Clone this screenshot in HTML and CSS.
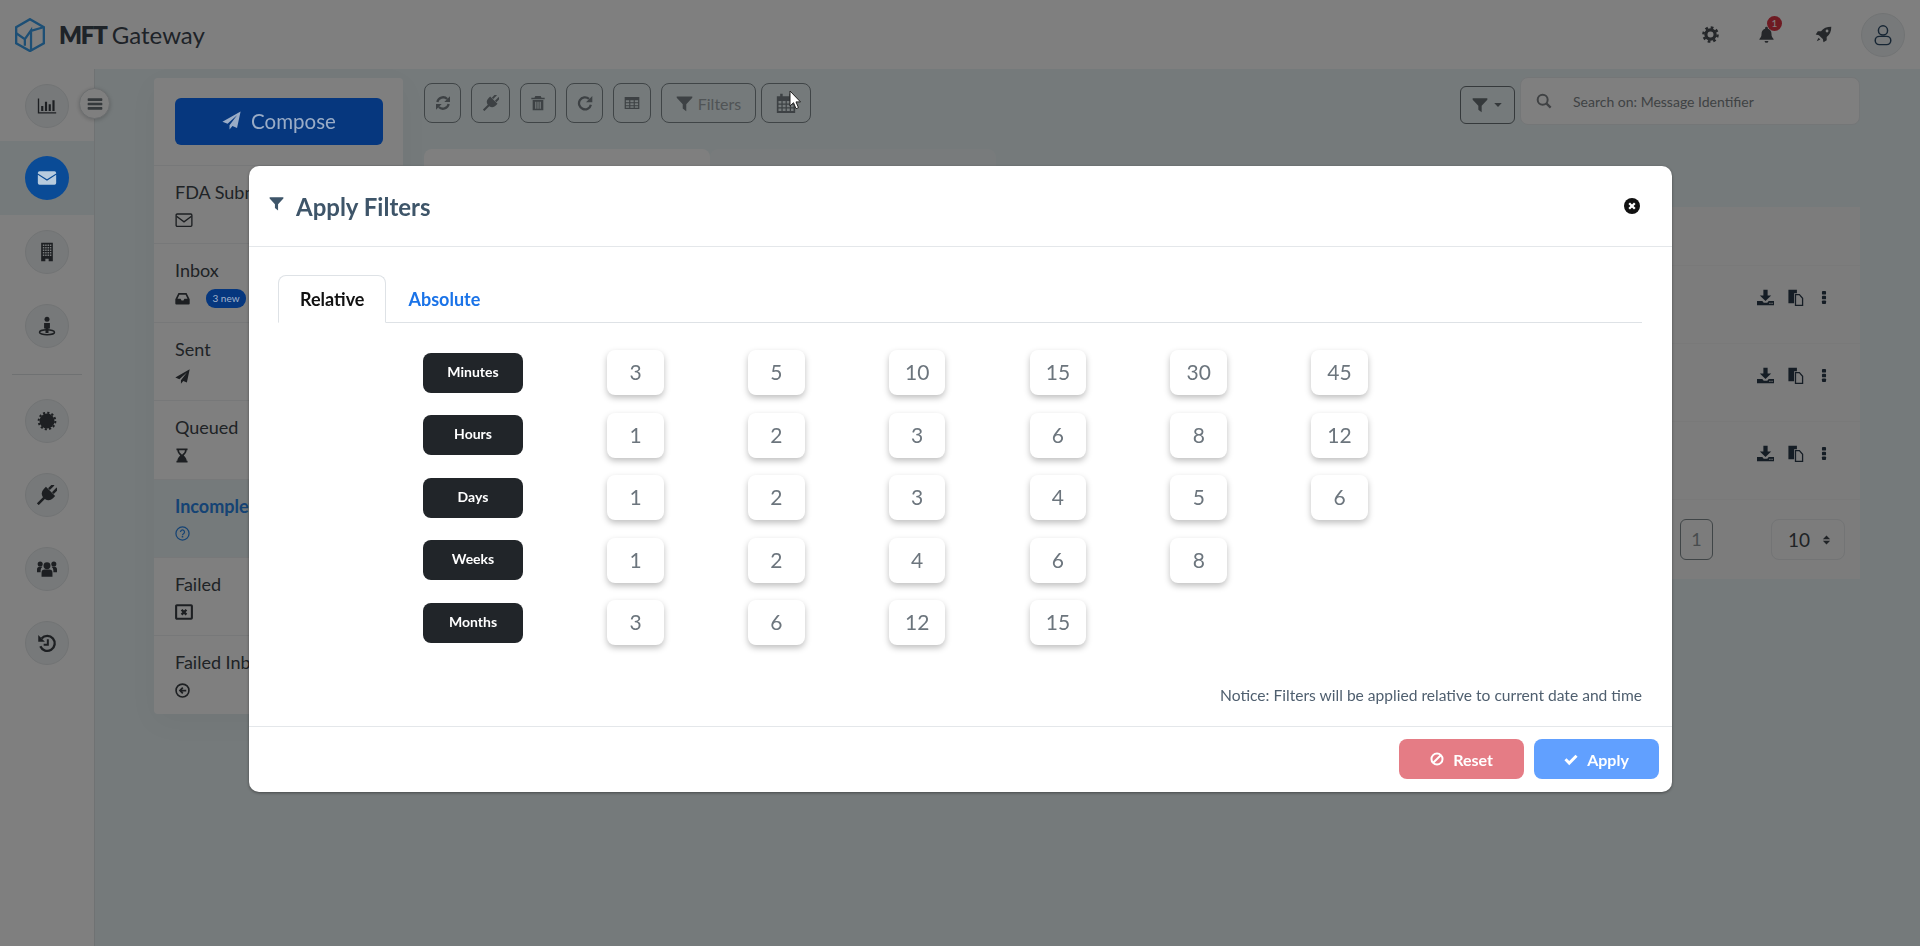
FILE: index.html
```html
<!DOCTYPE html>
<html lang="en">
<head>
    <meta charset="UTF-8">
    <meta name="viewport" content="width=device-width, initial-scale=1.0">
    <title>MFT Gateway - Apply Filters</title>
    <link rel="stylesheet" href="styles.css">
</head>
<body>
    <!-- icon sprite -->
    <svg class="sprite" xmlns="http://www.w3.org/2000/svg">
        <symbol id="i-chart" viewBox="0 0 24 24"><path d="M1 3h1.6v16.4H23V21H1z"/><path d="M5 12h2.6v6H5zM9.500 7h2.600v11H9.500zM14 10h2.600v8H14zM18.500 5h2.600v13h-2.600z"/></symbol>
        <symbol id="i-envelope" viewBox="0 0 24 24"><path d="M1 6a2 2 0 0 1 2-2h18a2 2 0 0 1 2 2v.6l-11 7-11-7z"/><path d="M1 8.200l11 7 11-7V18a2 2 0 0 1-2 2H3a2 2 0 0 1-2-2z"/></symbol>
        <symbol id="i-envelope-o" viewBox="0 0 24 24"><rect x="1.500" y="4" width="21" height="16.500" rx="1.500" fill="none" stroke="currentColor" stroke-width="1.800"/><path d="M2 7l10 7.500L22 7" fill="none" stroke="currentColor" stroke-width="1.800"/></symbol>
        <symbol id="i-building" viewBox="0 0 24 24"><path fill-rule="evenodd" d="M5 1h14v22h-5v-3h-4v3H5zM7 3v1.800h1.800V3zM9.800 3v1.800h1.800V3zM12.600 3v1.800h1.800V3zM15.400 3v1.800h1.800V3zM7 6v1.800h1.800V6zM9.800 6v1.800h1.800V6zM12.600 6v1.800h1.800V6zM15.400 6v1.800h1.800V6zM7 9v1.800h1.800V9zM9.800 9v1.800h1.800V9zM12.600 9v1.800h1.800V9zM15.400 9v1.800h1.800V9zM7 12v1.800h1.800V12zM9.800 12v1.800h1.800V12zM12.600 12v1.800h1.800V12zM15.400 12v1.800h1.800V12zM7 15v1.800h1.800V15zM9.800 15v1.800h1.800V15zM12.600 15v1.800h1.800V15zM15.400 15v1.800h1.800V15z"/></symbol>
        <symbol id="i-street" viewBox="0 0 24 24"><circle cx="12" cy="4" r="3"/><path d="M8.500 8.500h7V15h-1.700v5.500h-3.600V15H8.500z"/><ellipse cx="12" cy="19.500" rx="9" ry="3" fill="none" stroke="currentColor" stroke-width="1.800"/></symbol>
        <symbol id="i-cert" viewBox="0 0 24 24"><circle cx="12" cy="12" r="9"/><circle cx="12" cy="12" r="10" fill="none" stroke="currentColor" stroke-width="2.400" stroke-dasharray="2.618 2.618"/></symbol>
        <symbol id="i-plug" viewBox="2 2 20 20"><g transform="rotate(45 12 12)"><path d="M8 0h2.500v6.500H8zM13.500 0H16v6.500h-2.500z"/><path d="M5.500 7h13v3a6.500 6.500 0 0 1-5.200 6.400V25h-2.600v-8.600A6.500 6.500 0 0 1 5.500 10z"/></g></symbol>
        <symbol id="i-users" viewBox="1 2 22 20"><circle cx="12" cy="8.500" r="3.800"/><path d="M6 20.500v-4.500a3.500 3.500 0 0 1 3.500-3.500h5a3.500 3.500 0 0 1 3.500 3.500v4.500z"/><circle cx="4.500" cy="6.500" r="2.800"/><circle cx="19.500" cy="6.500" r="2.800"/><path d="M1 15.500v-3a3 3 0 0 1 3-3h3a5.500 5.500 0 0 0-2 4v2zM23 15.500v-3a3 3 0 0 0-3-3h-3a5.500 5.500 0 0 1 2 4v2z"/></symbol>
        <symbol id="i-history" viewBox="0 0 24 24"><path d="M5.500 6.500A9 9 0 1 1 4 16" fill="none" stroke="currentColor" stroke-width="2.800"/><path d="M1.500 2.500v8h8z"/><path d="M13 7.500V14H8" fill="none" stroke="currentColor" stroke-width="2.400"/></symbol>
        <symbol id="i-bars" viewBox="0 0 24 24"><path d="M2 3.500h20a1 1 0 0 1 1 1v2a1 1 0 0 1-1 1H2a1 1 0 0 1-1-1v-2a1 1 0 0 1 1-1zM2 10h20a1 1 0 0 1 1 1v2a1 1 0 0 1-1 1H2a1 1 0 0 1-1-1v-2a1 1 0 0 1 1-1zM2 16.500h20a1 1 0 0 1 1 1v2a1 1 0 0 1-1 1H2a1 1 0 0 1-1-1v-2a1 1 0 0 1 1-1z"/></symbol>
        <symbol id="i-inbox" viewBox="0 0 24 24"><path fill-rule="evenodd" d="M5.500 3h13l5 10v7a1.500 1.500 0 0 1-1.500 1.500H2A1.500 1.500 0 0 1 .5 20v-7zM7 6l-3 6.500h5l1.500 2.500h3l1.500-2.500h5L17 6z"/></symbol>
        <symbol id="i-plane" viewBox="0 0 24 24"><path d="M23.500.5L.5 13.500l6.500 2.700L19 5.500 9.500 18v5.500l3.700-4.500 5.800 2.500z"/></symbol>
        <symbol id="i-hourglass" viewBox="0 0 24 24"><path fill-rule="evenodd" d="M2.500 0h19v3H20c0 4.500-3 6.500-5 9 2 2.500 5 4.500 5 9h1.500v3h-19v-3H4c0-4.500 3-6.500 5-9-2-2.500-5-4.500-5-9H2.500zM7 3c0 3.500 2 5 5 7.500 3-2.500 5-4 5-7.500z"/></symbol>
        <symbol id="i-question" viewBox="0 0 24 24"><circle cx="12" cy="12" r="10.500" fill="none" stroke="currentColor" stroke-width="2"/><path d="M8.800 9.500a3.200 3.200 0 1 1 4.800 2.800c-1 .6-1.600 1.200-1.600 2.400" fill="none" stroke="currentColor" stroke-width="2"/><rect x="10.800" y="16" width="2.400" height="2.400"/></symbol>
        <symbol id="i-window" viewBox="0 0 24 24"><rect x="1.500" y="3" width="21" height="18" rx="1" fill="none" stroke="currentColor" stroke-width="2.800"/><path d="M8.800 9l6.400 6.400M15.200 9l-6.400 6.400" fill="none" stroke="currentColor" stroke-width="3.200"/></symbol>
        <symbol id="i-arrow-left" viewBox="0 0 24 24"><circle cx="12" cy="12" r="10.300" fill="none" stroke="currentColor" stroke-width="2.600"/><path d="M12.500 7.500L8 12l4.500 4.500M8.500 12H18" fill="none" stroke="currentColor" stroke-width="2.800"/></symbol>
        <symbol id="i-refresh" viewBox="0 0 24 24"><path d="M3.500 10.500A8.800 8.800 0 0 1 18.300 6" fill="none" stroke="currentColor" stroke-width="3.400"/><path d="M22.500 2v8.500H14z"/><path d="M20.500 13.500A8.800 8.800 0 0 1 5.700 18" fill="none" stroke="currentColor" stroke-width="3.400"/><path d="M1.500 22v-8.500H10z"/></symbol>
        <symbol id="i-trash" viewBox="0 0 24 24"><path fill-rule="evenodd" d="M8 1.500h8l1.300 2.500H22v2.300H2V4h4.700zM4 7.500h16V23H4zM7.800 10v10.500h1.800V10zM11.100 10v10.500h1.800V10zM14.400 10v10.500h1.800V10z"/></symbol>
        <symbol id="i-repeat" viewBox="0 0 24 24"><path d="M20.800 14.500A9 9 0 1 1 18 5.800" fill="none" stroke="currentColor" stroke-width="3.400"/><path d="M23 1.500v9.500h-9.500z"/></symbol>
        <symbol id="i-table" viewBox="0 0 24 24"><path fill-rule="evenodd" d="M1 3h22v18H1zM2.800 8v3h5v-3zM9.500 8v3h5v-3zM16.200 8v3h5v-3zM2.800 12.500v3h5v-3zM9.500 12.500v3h5v-3zM16.200 12.500v3h5v-3zM2.800 17v2.300h5V17zM9.500 17v2.300h5V17zM16.200 17v2.300h5V17z"/></symbol>
        <symbol id="i-filter" viewBox="0 0 24 24"><path d="M1 2h22v2L14.500 13v10L9.500 19v-6L1 4z"/></symbol>
        <symbol id="i-calendar" viewBox="0 0 24 24"><path fill-rule="evenodd" d="M5 1h3v3h8V1h3v3h4v20H1V4h4zM3 9.500v3h3.500v-3zM8 9.500v3h3.500v-3zM13 9.500v3h3.500v-3zM18 9.500v3h3v-3zM3 14v3h3.500v-3zM8 14v3h3.500v-3zM13 14v3h3.500v-3zM18 14v3h3v-3zM3 18.500v3h3.500v-3zM8 18.500v3h3.500v-3zM13 18.500v3h3.500v-3zM18 18.500v3h3v-3z"/></symbol>
        <symbol id="i-cog" viewBox="0 0 24 24"><circle cx="12" cy="12" r="6.500" fill="none" stroke="currentColor" stroke-width="4.500"/><circle cx="12" cy="12" r="10" fill="none" stroke="currentColor" stroke-width="3.500" stroke-dasharray="3.850 4"/></symbol>
        <symbol id="i-bell" viewBox="0 0 24 24"><path d="M12 1a2 2 0 0 1 2 2v.8c3.500 1 5 3.700 5 7.200 0 4.500 1.500 5.500 3 7.500v1H2v-1c1.500-2 3-3 3-7.500 0-3.500 1.500-6.200 5-7.200V3a2 2 0 0 1 2-2zM9.300 21h5.400a2.700 2.700 0 0 1-5.400 0z"/></symbol>
        <symbol id="i-rocket" viewBox="0 0 24 24"><path fill-rule="evenodd" d="M23 1c-6.500 0-11 2-14.500 6.500H4L1 12l4.500 1 5.500 5.500 1 4.500 4.500-3v-4.500C21 12 23 7.500 23 1zM17 5a2 2 0 1 1 0 4 2 2 0 0 1 0-4z"/><path d="M5 16.500l2.500 2.500L2.500 21.500z"/></symbol>
        <symbol id="i-user" viewBox="0 0 24 24"><circle cx="12" cy="7" r="5" fill="none" stroke="currentColor" stroke-width="1.600"/><rect x="3.500" y="13.500" width="17" height="9" rx="4.500" fill="none" stroke="currentColor" stroke-width="1.600"/></symbol>
        <symbol id="i-search" viewBox="0 0 24 24"><circle cx="10" cy="10" r="7.500" fill="none" stroke="currentColor" stroke-width="3"/><path d="M15.500 15.500l6.500 6.500" fill="none" stroke="currentColor" stroke-width="3.400"/></symbol>
        <symbol id="i-caret" viewBox="0 0 24 24"><path d="M3 7h18l-9 10z"/></symbol>
        <symbol id="i-download" viewBox="0 0 24 24"><path d="M9 1h6v8h5l-8 8-8-8h5z"/><path fill-rule="evenodd" d="M0 17h7.500l2 2.500h5l2-2.500H24v6H0zM17.500 19.500v1.500h1.500v-1.500zM20.500 19.500v1.500H22v-1.500z"/></symbol>
        <symbol id="i-copy" viewBox="0 0 24 24"><path d="M2 1h12v5h-4v14H2z"/><path d="M12 8h5.500l4.500 5v10H12z" fill="none" stroke="currentColor" stroke-width="1.800"/></symbol>
        <symbol id="i-kebab" viewBox="0 0 24 24"><rect x="8.500" y="1" width="7" height="6" rx="1.500"/><rect x="8.500" y="9" width="7" height="6" rx="1.500"/><rect x="8.500" y="17" width="7" height="6" rx="1.500"/></symbol>
        <symbol id="i-sort" viewBox="0 0 24 24"><path d="M12 2l8 8.500H4zM12 22l-8-8.500h16z"/></symbol>
        <symbol id="i-ban" viewBox="0 0 24 24"><circle cx="12" cy="12" r="9.500" fill="none" stroke="currentColor" stroke-width="3.400"/><path d="M5.500 18.500l13-13" fill="none" stroke="currentColor" stroke-width="3.400"/></symbol>
        <symbol id="i-check" viewBox="0 0 24 24"><path d="M2.500 12.500l6.500 6.500L21.500 6.500" fill="none" stroke="currentColor" stroke-width="5"/></symbol>
        <symbol id="i-close" viewBox="0 0 24 24"><circle cx="12" cy="12" r="12"/><path d="M7.800 7.800l8.400 8.400M16.200 7.800l-8.400 8.400" fill="none" stroke="#fff" stroke-width="3.400"/></symbol>
    </svg>

    <div class="topbar">
        <div class="logo">
            <svg class="logo-mark" viewBox="0 0 29 33"><path d="M14.500 1.200L28 9v15.500L14.500 32 1 24.500V9z" fill="none" stroke="currentColor" stroke-width="2.400"/><path d="M1.500 15l8 5.500 6-8.500v19M15.500 12.500L27.500 9M9.500 20.500V27" fill="none" stroke="currentColor" stroke-width="2.200"/></svg>
            <span class="logo-text"><b>MFT</b> Gateway</span>
        </div>
        <div class="top-icons">
            <svg class="ic top-ic"><use href="#i-cog"/></svg>
            <span class="bell">
                <svg class="ic top-ic"><use href="#i-bell"/></svg>
                <span class="bell-badge">1</span>
            </span>
            <svg class="ic top-ic"><use href="#i-rocket"/></svg>
            <span class="user-btn"><svg class="ic"><use href="#i-user"/></svg></span>
        </div>
    </div>

    <div class="layout">
        <div class="sidebar">
            <div class="side-item"><span class="side-btn"><svg class="ic"><use href="#i-chart"/></svg></span></div>
            <div class="side-item active"><span class="side-btn"><svg class="ic"><use href="#i-envelope"/></svg></span></div>
            <div class="side-item"><span class="side-btn"><svg class="ic"><use href="#i-building"/></svg></span></div>
            <div class="side-item"><span class="side-btn"><svg class="ic"><use href="#i-street"/></svg></span></div>
            <div class="side-divider"></div>
            <div class="side-item"><span class="side-btn"><svg class="ic"><use href="#i-cert"/></svg></span></div>
            <div class="side-item"><span class="side-btn"><svg class="ic"><use href="#i-plug"/></svg></span></div>
            <div class="side-item"><span class="side-btn"><svg class="ic"><use href="#i-users"/></svg></span></div>
            <div class="side-item"><span class="side-btn"><svg class="ic"><use href="#i-history"/></svg></span></div>
            <span class="side-toggle"><svg class="ic"><use href="#i-bars"/></svg></span>
        </div>

        <div class="folders">
            <div class="compose-wrap">
                <button class="compose"><svg class="ic"><use href="#i-plane"/></svg><span>Compose</span></button>
            </div>
            <div class="folder">
                <div class="folder-name">FDA Submissions</div>
                <div class="folder-ic"><svg class="ic fda"><use href="#i-envelope-o"/></svg></div>
            </div>
            <div class="folder">
                <div class="folder-name">Inbox</div>
                <div class="folder-ic"><svg class="ic"><use href="#i-inbox"/></svg><span class="new-badge">3 new</span></div>
            </div>
            <div class="folder">
                <div class="folder-name">Sent</div>
                <div class="folder-ic"><svg class="ic"><use href="#i-plane"/></svg></div>
            </div>
            <div class="folder">
                <div class="folder-name">Queued</div>
                <div class="folder-ic"><svg class="ic tall"><use href="#i-hourglass"/></svg></div>
            </div>
            <div class="folder current">
                <div class="folder-name">Incomplete</div>
                <div class="folder-ic"><svg class="ic"><use href="#i-question"/></svg></div>
            </div>
            <div class="folder">
                <div class="folder-name">Failed</div>
                <div class="folder-ic"><svg class="ic fda"><use href="#i-window"/></svg></div>
            </div>
            <div class="folder">
                <div class="folder-name">Failed Inbound</div>
                <div class="folder-ic"><svg class="ic"><use href="#i-arrow-left"/></svg></div>
            </div>
        </div>

        <div class="content">
            <div class="toolbar">
                <div class="tools">
                    <button class="tool"><svg class="ic"><use href="#i-refresh"/></svg></button>
                    <button class="tool"><svg class="ic"><use href="#i-plug"/></svg></button>
                    <button class="tool"><svg class="ic"><use href="#i-trash"/></svg></button>
                    <button class="tool"><svg class="ic"><use href="#i-repeat"/></svg></button>
                    <button class="tool"><svg class="ic"><use href="#i-table"/></svg></button>
                    <button class="tool"><svg class="ic"><use href="#i-filter"/></svg>Filters</button>
                    <button class="tool"><svg class="ic"><use href="#i-calendar"/></svg></button>
                </div>
                <button class="filter-drop"><svg class="ic"><use href="#i-filter"/></svg><svg class="ic caret"><use href="#i-caret"/></svg></button>
                <div class="search">
                    <svg class="ic"><use href="#i-search"/></svg>
                    <span>Search on: Message Identifier</span>
                </div>
            </div>

            <div class="msg-tabs">
                <div class="msg-tab"></div>
                <div class="msg-tab faint"></div>
            </div>

            <div class="msg-card">
                <div class="msg-head"></div>
                <div class="msg-row">
                    <svg class="ic"><use href="#i-download"/></svg>
                    <svg class="ic"><use href="#i-copy"/></svg>
                    <svg class="ic kebab"><use href="#i-kebab"/></svg>
                </div>
                <div class="msg-row">
                    <svg class="ic"><use href="#i-download"/></svg>
                    <svg class="ic"><use href="#i-copy"/></svg>
                    <svg class="ic kebab"><use href="#i-kebab"/></svg>
                </div>
                <div class="msg-row">
                    <svg class="ic"><use href="#i-download"/></svg>
                    <svg class="ic"><use href="#i-copy"/></svg>
                    <svg class="ic kebab"><use href="#i-kebab"/></svg>
                </div>
                <div class="msg-foot">
                    <span class="page-no">1</span>
                    <span class="page-size">10 <svg class="ic"><use href="#i-sort"/></svg></span>
                </div>
            </div>
        </div>
    </div>

    <div class="backdrop"></div>

    <div class="modal-wrap">
        <div class="modal">
            <div class="modal-header">
                <svg class="ic title-ic"><use href="#i-filter"/></svg>
                <h2>Apply Filters</h2>
                <svg class="ic close-ic"><use href="#i-close"/></svg>
            </div>
            <div class="modal-body">
                <div class="tabs">
                    <div class="tab selected">Relative</div>
                    <div class="tab">Absolute</div>
                </div>
                <div class="ranges">
                    <div class="range-label">Minutes</div>
                    <div class="range-val">3</div><div class="range-val">5</div><div class="range-val">10</div><div class="range-val">15</div><div class="range-val">30</div><div class="range-val">45</div>
                    <div class="range-label">Hours</div>
                    <div class="range-val">1</div><div class="range-val">2</div><div class="range-val">3</div><div class="range-val">6</div><div class="range-val">8</div><div class="range-val">12</div>
                    <div class="range-label">Days</div>
                    <div class="range-val">1</div><div class="range-val">2</div><div class="range-val">3</div><div class="range-val">4</div><div class="range-val">5</div><div class="range-val">6</div>
                    <div class="range-label">Weeks</div>
                    <div class="range-val">1</div><div class="range-val">2</div><div class="range-val">4</div><div class="range-val">6</div><div class="range-val">8</div><div></div>
                    <div class="range-label">Months</div>
                    <div class="range-val">3</div><div class="range-val">6</div><div class="range-val">12</div><div class="range-val">15</div><div></div><div></div>
                </div>
                <p class="notice">Notice: Filters will be applied relative to current date and time</p>
            </div>
            <div class="modal-footer">
                <button class="action reset"><svg class="ic"><use href="#i-ban"/></svg>Reset</button>
                <button class="action apply"><svg class="ic"><use href="#i-check"/></svg>Apply</button>
            </div>
        </div>
    </div>

    <!-- mouse pointer in the capture -->
    <svg class="pointer" viewBox="0 0 12 20"><path d="M1 1v15l3.500-3.300 2.500 6 2.500-1-2.500-5.800H11.500z" fill="#fff" stroke="#222" stroke-width="1"/></svg>
</body>
</html>
```

FILE: styles.css
```css
* {
    box-sizing: border-box;
}

html, body {
    margin: 0;
    height: 946px;
    overflow: hidden;
}

body {
    background: #eaf4f6;
    color: #40464c;
    font-family: Lato, "Open Sans", sans-serif;
    font-size: 16px;
}

.sprite {
    display: none;
}

.ic {
    width: 16px;
    height: 16px;
    fill: currentColor;
    flex: none;
}

button {
    font-family: inherit;
}

/* top bar */
.topbar {
    height: 69px;
    background: #fff;
    display: flex;
    align-items: center;
    justify-content: space-between;
    padding: 0 15px;
}

.logo {
    display: flex;
    align-items: center;
    gap: 14px;
}

.logo-mark {
    width: 30px;
    height: 34px;
    color: #3a9eea;
}

.logo-text {
    font-size: 24px;
    color: #3c4650;
}

.logo-text b {
    font-weight: 800;
    letter-spacing: -1.200px;
    margin-right: -1px;
}

.top-icons {
    display: flex;
    align-items: center;
    height: 100%;
    color: #4a4f54;
}

.top-ic {
    width: 17px;
    height: 17px;
}

.top-icons > .top-ic:first-child {
    margin-right: 39px;
}

.bell {
    position: relative;
    display: flex;
    margin-right: 40px;
}

.bell-badge {
    position: absolute;
    top: -10px;
    left: 9px;
    width: 15px;
    height: 15px;
    border-radius: 50%;
    background: #dc3545;
    color: #fff;
    font-size: 10px;
    line-height: 15px;
    text-align: center;
}

.user-btn {
    width: 44px;
    height: 44px;
    border-radius: 50%;
    background: #eef2f4;
    border: 1px solid #e3e7e9;
    margin-left: 29px;
    display: flex;
    align-items: center;
    justify-content: center;
    color: #2e4c68;
}

.user-btn .ic {
    width: 22px;
    height: 22px;
}

/* page under the topbar */
.layout {
    display: flex;
    height: 877px;
}

.sidebar {
    position: relative;
    width: 95px;
    background: #fff;
    border-right: 1px solid #dfe5e7;
    flex: none;
}

.side-item {
    height: 74px;
    display: flex;
    align-items: center;
    justify-content: center;
}

.side-item:first-child {
    height: 72px;
    padding-top: 2px;
}

.side-item.active {
    background: #eaf4f6;
}

.side-btn {
    width: 44px;
    height: 44px;
    border-radius: 50%;
    background: #eef2f4;
    border: 1px solid #e3e7e9;
    display: flex;
    align-items: center;
    justify-content: center;
    color: #3a3f44;
}

.side-btn .ic {
    width: 20px;
    height: 20px;
}

/* this one shows brighter than the backdrop */
.side-item.active .side-btn {
    position: relative;
    z-index: 20;
    background: #0a4b96;
    border: 0;
    color: #b7cbde;
}

.side-divider {
    height: 1px;
    background: #dfe3e5;
    margin: 11px 12px 9px;
}

.side-toggle {
    position: absolute;
    top: 19px;
    left: 79px;
    width: 31px;
    height: 31px;
    border-radius: 50%;
    background: #fff;
    border: 1px solid #d9dde0;
    box-shadow: 0 1px 4px rgba(0, 0, 0, 0.2);
    display: flex;
    align-items: center;
    justify-content: center;
    color: #6a7278;
}

/* folder list */
.folders {
    width: 249px;
    height: 636px;
    margin: 9px 0 0 59px;
    background: #fff;
    border-radius: 4px;
    box-shadow: 0 8px 30px rgba(0, 0, 0, 0.04);
    flex: none;
}

.compose-wrap {
    height: 88px;
    padding: 20px 21px 0;
    border-bottom: 1px solid #eef0f2;
}

.compose {
    width: 208px;
    height: 47px;
    padding: 0 0 2px;
    background: #0d6efd;
    border: 0;
    border-radius: 6px;
    font-size: 20.5px;
    display: flex;
    align-items: center;
    justify-content: center;
    gap: 10px;
}

.compose .ic,
.compose span {
    position: relative;
    z-index: 20;
    color: #9aacc6;
}

.compose .ic {
    width: 19px;
    height: 19px;
}

.folder {
    height: 78.4px;
    padding: 12px 21px 0;
    border-bottom: 1px solid #eef0f2;
}

.folder:last-child {
    border-bottom: 0;
}

.folder.current {
    background: #eaf4f6;
    color: #2a86e8;
    font-weight: 700;
}

.folder-name {
    font-size: 18px;
    line-height: 28px;
    white-space: nowrap;
}

.folder-ic {
    display: flex;
    align-items: center;
    gap: 16px;
    height: 20px;
    margin-top: 4px;
    color: #3a3f44;
}

.folder.current .folder-ic {
    color: #2a86e8;
}

.folder-ic .ic {
    width: 15px;
    height: 15px;
}

.folder-ic .fda {
    width: 18px;
    height: 18px;
}

.folder-ic .tall {
    width: 14px;
    height: 17px;
}

.new-badge {
    position: relative;
    z-index: 20;
    width: 40px;
    background: #06377e;
    color: #a4b5cd;
    font-size: 10px;
    line-height: 19px;
    text-align: center;
    border-radius: 9px;
}

/* message area */
.content {
    width: 1436px;
    margin: 8px 0 0 21px;
    flex: none;
}

.toolbar {
    display: flex;
    align-items: flex-start;
    height: 48px;
}

.tools {
    display: flex;
    gap: 10px;
    margin-top: 6px;
}

.tool {
    height: 40px;
    width: 37px;
    padding: 0;
    background: transparent;
    border: 1px solid #808a8e;
    border-radius: 8px;
    color: #7a8388;
    font-size: 16px;
    display: flex;
    align-items: center;
    justify-content: center;
    gap: 5px;
}

.tool:nth-child(2) { width: 39px; }
.tool:nth-child(3) { width: 36px; }
.tool:nth-child(5) { width: 38px; }
.tool:nth-child(6) { width: 95px; color: #a0a8ac; }
.tool:nth-child(6) .ic { color: #7a8388; width: 17px; height: 17px; }
.tool:nth-child(7) { width: 50px; margin-left: -5px; }

.tool:nth-child(7) .ic {
    width: 20px;
    height: 20px;
}

.filter-drop {
    margin: 9px 0 0 auto;
    width: 55px;
    height: 38px;
    padding: 0;
    background: transparent;
    border: 1px solid #6a7276;
    border-radius: 6px;
    color: #6a7276;
    display: flex;
    align-items: center;
    justify-content: center;
    gap: 5px;
}

.filter-drop .caret {
    width: 10px;
    height: 10px;
}

.search {
    width: 340px;
    height: 48px;
    margin-left: 5px;
    background: #fff;
    border: 1px solid #e9ecef;
    border-radius: 8px;
    padding-left: 15px;
    display: flex;
    align-items: center;
    gap: 21px;
    color: #808589;
    font-size: 14px;
}

.msg-tabs {
    display: flex;
    height: 58px;
    margin-top: 24px;
}

.msg-tab {
    width: 286px;
    background: #fff;
    border-radius: 8px 8px 0 0;
}

.msg-tab.faint {
    opacity: 0.3;
}

.msg-card {
    background: #f8f8f8;
}

.msg-head {
    height: 59px;
    border-bottom: 1px solid #f2f2f2;
}

.msg-row {
    height: 78px;
    padding: 0 29px 14px 0;
    border-bottom: 1px solid #f2f2f2;
    display: flex;
    align-items: center;
    justify-content: flex-end;
    gap: 13px;
    color: #2b3a4a;
}

.msg-row .ic {
    width: 17px;
    height: 17px;
}

.msg-row .kebab {
    width: 14px;
    height: 15px;
}

.msg-foot {
    height: 79px;
    display: flex;
    align-items: center;
    justify-content: flex-end;
    gap: 58px;
    padding-right: 15px;
}

.page-no {
    width: 33px;
    height: 41px;
    border: 1px solid #808a8e;
    border-radius: 6px;
    color: #90989c;
    font-size: 18px;
    line-height: 39px;
    text-align: center;
}

.page-size {
    width: 74px;
    height: 41px;
    border: 1px solid #e6e8ea;
    border-radius: 8px;
    padding-left: 16px;
    font-size: 19px;
    color: #40464c;
    display: flex;
    align-items: center;
    gap: 11px;
}

.page-size .ic {
    width: 11px;
    height: 14px;
}

/* modal */
.backdrop {
    position: fixed;
    top: 0;
    right: 0;
    bottom: 0;
    left: 0;
    background: rgba(0, 0, 0, 0.5);
    z-index: 10;
}

.modal-wrap {
    position: fixed;
    top: 166px;
    left: 249px;
    z-index: 30;
}

.modal {
    width: 1423px;
    background: #fff;
    border-radius: 10px;
    box-shadow: 0 1px 3px rgba(0, 0, 0, 0.4);
}

.modal-header {
    height: 81px;
    border-bottom: 1px solid #e4e7ea;
    display: flex;
    align-items: center;
    padding: 0 32px 0 20px;
    color: #3e5569;
}

.modal-header h2 {
    margin: 0 0 0 12px;
    font-size: 24px;
    font-weight: 700;
}

.title-ic {
    width: 15px;
    height: 15px;
    margin-bottom: 6px;
}

.close-ic {
    margin-left: auto;
    color: #111;
}

.modal-body {
    padding: 28px 30px 19px 29px;
}

.tabs {
    display: flex;
    height: 48px;
    border-bottom: 1px solid #dee2e6;
}

.tab {
    height: 48px;
    padding: 0 21px;
    font-size: 18px;
    font-weight: 700;
    line-height: 46px;
    color: #1a73e8;
    border: 1px solid transparent;
}

.tab.selected {
    color: #111;
    background: #fff;
    border-color: #dee2e6 #dee2e6 #fff;
    border-radius: 8px 8px 0 0;
}

.ranges {
    display: grid;
    grid-template-columns: 100px repeat(6, 56.500px);
    grid-template-rows: repeat(5, 45px);
    column-gap: 84.300px;
    row-gap: 17.500px;
    align-items: center;
    margin: 27px 0 0 145px;
}

.range-label {
    width: 100px;
    height: 40px;
    margin-right: -1px;
    background: #212529;
    border-radius: 8px;
    color: #fff;
    font-size: 14px;
    font-weight: 700;
    line-height: 37px;
    text-align: center;
}

.range-val {
    height: 45px;
    background: #fff;
    border-radius: 8px;
    box-shadow: 0 3px 6px rgba(0, 0, 0, 0.25);
    color: #6c757d;
    font-size: 21px;
    line-height: 44px;
    text-align: center;
}

.notice {
    margin: 38px 0 0;
    font-size: 15.6px;
    line-height: 24px;
    text-align: right;
    color: #4f5f6f;
}

.modal-footer {
    height: 66px;
    border-top: 1px solid #e4e7ea;
    display: flex;
    justify-content: flex-end;
    gap: 10px;
    padding: 12px 13px 0 0;
}

.action {
    width: 125px;
    height: 40px;
    border: 0;
    border-radius: 8px;
    color: #fff;
    font-size: 16px;
    font-weight: 700;
    display: flex;
    align-items: center;
    justify-content: center;
    gap: 9px;
}

.action .ic {
    width: 14px;
    height: 14px;
}

.reset {
    background: #e57c85;
}

.apply {
    background: #61a0ff;
}

.pointer {
    position: fixed;
    top: 90px;
    left: 789px;
    width: 12px;
    height: 20px;
    z-index: 40;
}
```
